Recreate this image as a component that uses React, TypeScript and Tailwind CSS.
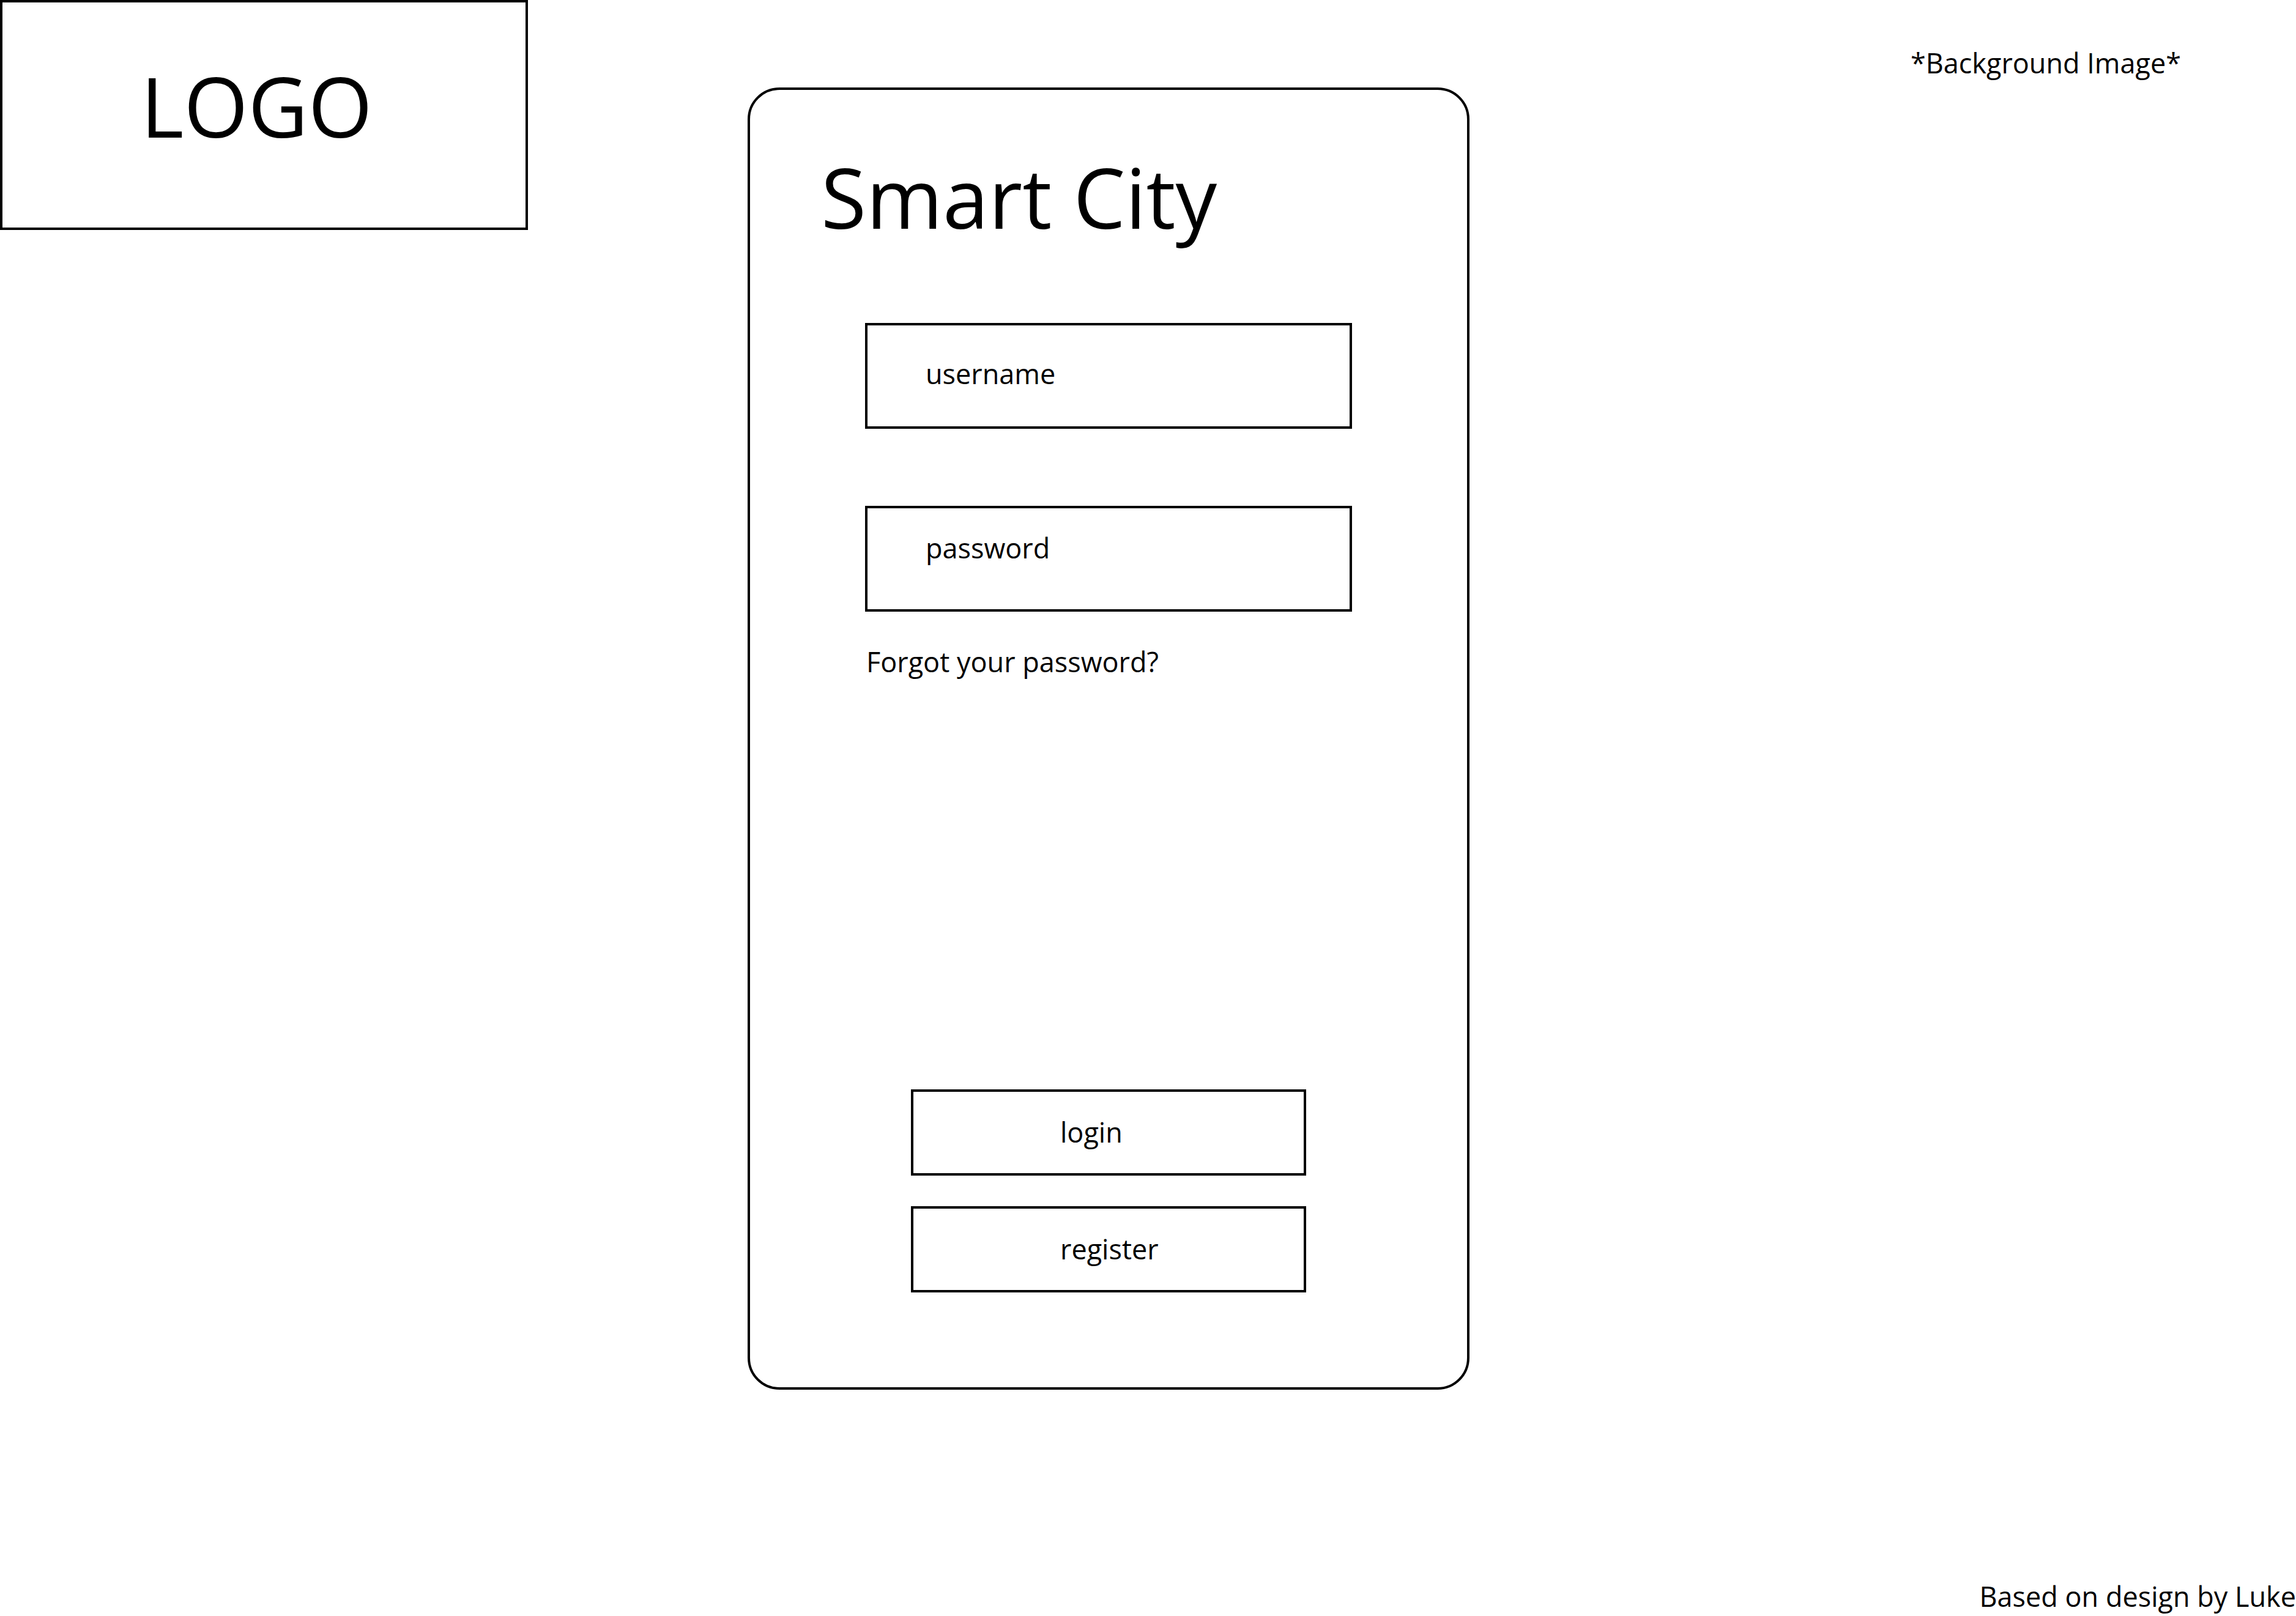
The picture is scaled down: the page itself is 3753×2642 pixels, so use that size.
import React from "react";

type FieldProps = {
  id: string;
  label: string;
  type: string;
  spacing: string;
};

function Field({ id, label, type, spacing }: FieldProps) {
  return (
    <input
      id={id}
      name={id}
      type={type}
      aria-label={label}
      placeholder={label}
      className={`w-full min-w-0 rounded-none border-4 border-black bg-white px-[95px] text-[45px] leading-[64px] text-black outline-none placeholder:text-black placeholder:opacity-100 ${spacing}`}
    />
  );
}

function ActionButton({ label, type }: { label: string; type: "submit" | "button" }) {
  return (
    <button
      type={type}
      className="w-full border-4 border-black bg-white pt-[34px] pb-[35px] pl-[240px] text-left text-[45px] leading-[64px] text-black"
    >
      {label}
    </button>
  );
}

export default function App() {
  return (
    <div className="flex min-h-screen flex-col bg-white font-['Open_Sans','Noto_Sans',sans-serif] text-[45px] leading-[64px] text-black">
      <div className="grid grid-cols-[1222fr_1180fr_1351fr] items-start">
        <header className="flex">
          <div className="w-[70.6%] border-4 border-black pt-[73px] pb-[103px] pl-[226px] text-[135px] leading-[192px]">
            LOGO
          </div>
        </header>

        <main className="mt-[143px] rounded-[52px] border-4 border-black pt-[79px] pb-[155px]">
          <h1 className="pl-[116px] text-[135px] leading-[192px]">Smart City</h1>
          <form className="mt-[110px] flex flex-col" onSubmit={(e) => e.preventDefault()}>
            <div className="flex flex-col gap-[126px] px-[188px]">
              <Field id="username" label="username" type="text" spacing="pt-[47px] pb-[54px]" />
              <Field id="password" label="password" type="password" spacing="pt-[33px] pb-[68px]" />
            </div>
            <a href="#forgot" className="mt-[50px] ml-[190px] self-start">
              Forgot your password?
            </a>
            <div className="mt-[667px] flex flex-col gap-[50px] px-[263px]">
              <ActionButton label="login" type="submit" />
              <ActionButton label="register" type="button" />
            </div>
          </form>
        </main>

        <p className="mt-[71px] mr-[188px] text-right">*Background Image*</p>
      </div>
      <footer className="mt-auto text-right">Based on design by Luke</footer>
    </div>
  );
}
